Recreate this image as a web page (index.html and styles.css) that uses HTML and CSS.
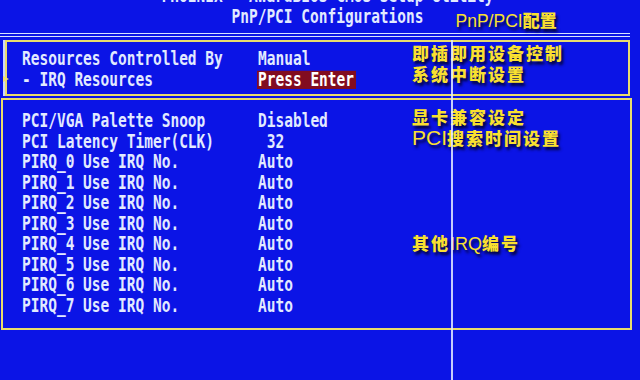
FILE: index.html
```html
<!DOCTYPE html>
<html lang="zh-CN">

<head>
    <meta charset="UTF-8">
    <meta name="viewport" content="width=device-width, initial-scale=1.0">
    <title>PnP/PCI Configurations</title>
    <link rel="stylesheet" href="styles.css">
</head>

<body>
    <div class="screen">
        <div class="head">
            <div class="head-line cut">
                <div class="head-text">PHOENIX - AwardBIOS CMOS Setup Utility</div>
            </div>
            <div class="head-line">
                <div class="head-text">PnP/PCI Configurations</div>
                <div class="note note-title"><span class="lat">PnP/PCI</span>配置</div>
            </div>
        </div>
        <div class="rule"></div>

        <div class="box box-top">
            <div class="row">
                <div class="label">Resources Controlled By</div>
                <div class="value">Manual</div>
                <div class="note">即插即用设备控制</div>
            </div>
            <div class="row current">
                <span class="marker"></span>
                <div class="label">- IRQ Resources</div>
                <div class="value"><span class="select">Press Enter</span></div>
                <div class="note">系统中断设置</div>
            </div>
        </div>

        <div class="box box-main">
            <div class="row">
                <div class="label">PCI/VGA Palette Snoop</div>
                <div class="value">Disabled</div>
                <div class="note note-up">显卡兼容设定</div>
            </div>
            <div class="row">
                <div class="label">PCI Latency Timer(CLK)</div>
                <div class="value"> 32</div>
                <div class="note note-up-more"><span class="lat">PCI</span>搜索时间设置</div>
            </div>
            <div class="row">
                <div class="label">PIRQ_0 Use IRQ No.</div>
                <div class="value">Auto</div>
            </div>
            <div class="row">
                <div class="label">PIRQ_1 Use IRQ No.</div>
                <div class="value">Auto</div>
            </div>
            <div class="row">
                <div class="label">PIRQ_2 Use IRQ No.</div>
                <div class="value">Auto</div>
            </div>
            <div class="row">
                <div class="label">PIRQ_3 Use IRQ No.</div>
                <div class="value">Auto</div>
            </div>
            <div class="row">
                <div class="label">PIRQ_4 Use IRQ No.</div>
                <div class="value">Auto</div>
                <div class="note">其他<span class="lat lat-sm">IRQ</span>编号</div>
            </div>
            <div class="row">
                <div class="label">PIRQ_5 Use IRQ No.</div>
                <div class="value">Auto</div>
            </div>
            <div class="row">
                <div class="label">PIRQ_6 Use IRQ No.</div>
                <div class="value">Auto</div>
            </div>
            <div class="row">
                <div class="label">PIRQ_7 Use IRQ No.</div>
                <div class="value">Auto</div>
            </div>
        </div>

        <div class="guide"></div>
    </div>
</body>

</html>
```

FILE: styles.css
```css
body {
    margin: 0;
    background-color: #0b14e6;
}

.screen {
    position: relative;
    width: 640px;
    height: 380px;
    overflow: hidden;
    font-family: "DejaVu Sans Mono", monospace;
    font-weight: bold;
    font-size: 14.5px;
    color: #e2eaff;
}

/* title lines */
.head {
    padding-left: 15px;
    line-height: 20.5px;
}

.head-line {
    display: grid;
    grid-template-columns: 1fr auto 1fr;
    grid-template-rows: 20.5px;
}

.head-line.cut {
    margin-top: -14px;
}

.head-text {
    grid-column: 2;
    white-space: pre;
    transform: scaleY(1.3);
}

.rule {
    margin: 6px 10px 0 0;
    border-top: 4px double #d6e2ff;
}

/* setting boxes */
.box {
    border: 2px solid #e9dc6c;
}

.box-top {
    margin: 3px 10px 0 5px;
    padding: 6px 0 4px 15px;
    box-shadow: -2px 0 0 #c9d4ff;
}

.box-main {
    margin: 2px 8px 0 1px;
    padding: 10px 0 13px 19px;
}

.row {
    display: grid;
    grid-template-columns: 236px 154px 1fr;
    grid-template-rows: 20.5px;
    line-height: 20.5px;
}

.box-top .row {
    grid-template-rows: 21px;
    line-height: 21px;
}

.label,
.value {
    white-space: pre;
    transform: translateY(1px) scaleY(1.3);
}

.select {
    display: inline-block;
    line-height: 14px;
    margin-left: -1px;
    padding: 0 2px 0 1px;
    background-color: #820c20;
    color: #fff;
}

.current {
    position: relative;
}

.marker {
    position: absolute;
    left: -19px;
    top: 7px;
    border-left: 6px solid #f0e070;
    border-top: 3.5px solid transparent;
    border-bottom: 3.5px solid transparent;
}

/* yellow notes */
.note {
    grid-column: 3;
    font-family: "Noto Sans CJK SC", sans-serif;
    font-weight: 900;
    font-size: 17px;
    letter-spacing: 2px;
    white-space: nowrap;
    color: #f9e030;
    text-shadow: 2px 3px 3px rgba(0, 0, 30, 0.9);
}

.box-top .note {
    transform: translateY(-6px);
}

.note-up {
    transform: translateY(-3px);
}

.note-up-more {
    transform: translateY(-4px);
}

.lat {
    font-family: "Liberation Sans", sans-serif;
    font-weight: normal;
    font-size: 21px;
    line-height: 1;
    letter-spacing: 0;
}

.lat-sm {
    font-size: 18px;
}

.note-title {
    transform: translateY(3px);
    margin-left: 32px;
    font-size: 17px;
    letter-spacing: 0;
}

.note-title .lat {
    font-size: 17.5px;
}

.guide {
    position: absolute;
    left: 451px;
    top: 40px;
    bottom: 0;
    width: 2px;
    background-color: rgba(230, 236, 255, 0.85);
}
```
